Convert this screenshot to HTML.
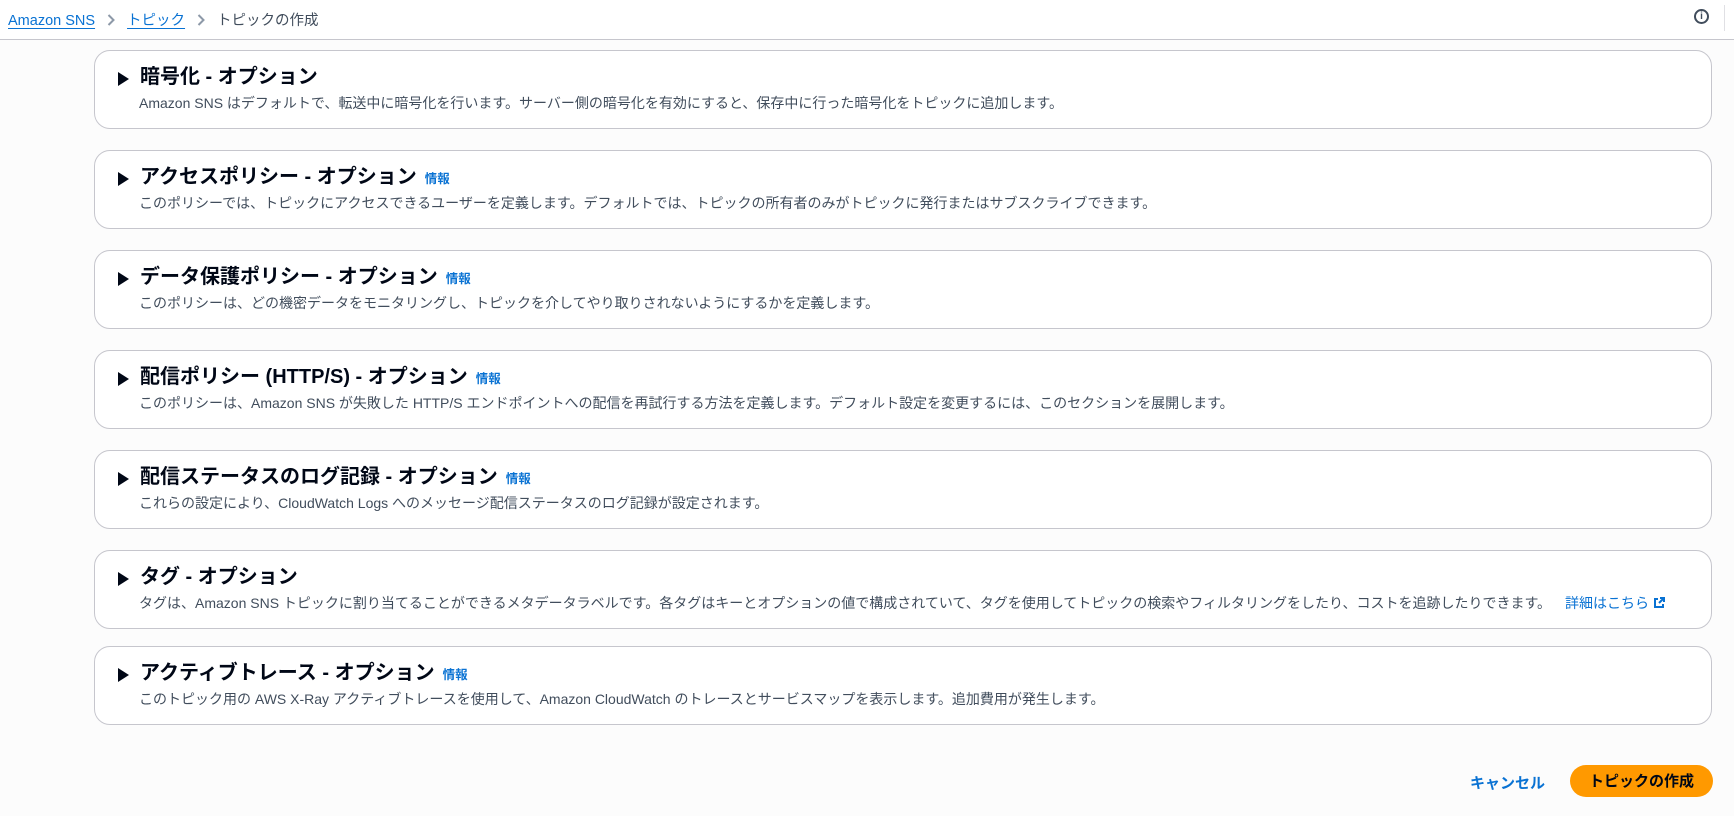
<!DOCTYPE html>
<html><head><meta charset="utf-8"><style>
*{margin:0;padding:0;box-sizing:border-box}
body{width:1734px;height:816px;background:#fcfcfc;font-family:"Liberation Sans","Noto Sans CJK JP",sans-serif;position:relative;overflow:hidden;color:#000716}
.hdr{position:absolute;left:0;top:0;width:1734px;height:40px;background:#fff;border-bottom:1px solid #c6c6cd}
.bc{position:absolute;left:8px;top:9px;font-size:14.5px;color:#414d5c;white-space:nowrap}
.bc a{color:#0972d3;text-decoration:underline;text-underline-offset:3px}
.bc svg{margin:0 12px;vertical-align:-1px}
.info{position:absolute;left:1694px;top:9px;width:15px;height:15px;border:2px solid #414d5c;border-radius:50%;font-size:10px;font-weight:bold;text-align:center;line-height:11px;color:#414d5c}
.vl{position:absolute;left:1724px;top:5px;width:1px;height:26px;background:#e0e0e4}
.card{position:absolute;left:94px;width:1618px;height:79px;background:#fff;border:1px solid #c6c6cd;border-radius:16px}
.tri{position:absolute;left:23px;top:21px;width:0;height:0;border-left:11px solid #000716;border-top:7px solid transparent;border-bottom:7px solid transparent}
.t{position:absolute;left:45px;top:14px;font-size:20px;font-weight:bold;white-space:nowrap;line-height:24px}
.t .i{font-size:12.5px;color:#0972d3;margin-left:8px;font-weight:bold}
.d{position:absolute;left:44px;top:43px;font-size:14px;color:#414d5c;white-space:nowrap;line-height:18px}
.d a{color:#0972d3;margin-left:14px}
.cancel{position:absolute;left:1470px;top:772px;font-size:15px;font-weight:bold;color:#0972d3}
.btn{position:absolute;left:1570px;top:765px;width:143px;height:32px;background:#ff9900;border-radius:16px;font-size:15px;font-weight:bold;text-align:center;line-height:33px;color:#000716}
</style></head><body>
<div class="hdr">
<div class="bc"><a>Amazon SNS</a><svg width="8" height="12" viewBox="0 0 8 12"><path d="M1.5 1l5 5-5 5" fill="none" stroke="#8d99a8" stroke-width="2"/></svg><a>トピック</a><svg width="8" height="12" viewBox="0 0 8 12"><path d="M1.5 1l5 5-5 5" fill="none" stroke="#8d99a8" stroke-width="2"/></svg>トピックの作成</div>
<div class="info">i</div><div class="vl"></div>
</div>
<div class="card" style="top:50px"><div class="tri"></div><div class="t">暗号化 - オプション</div><div class="d">Amazon SNS はデフォルトで、転送中に暗号化を行います。サーバー側の暗号化を有効にすると、保存中に行った暗号化をトピックに追加します。</div></div>
<div class="card" style="top:150px"><div class="tri"></div><div class="t">アクセスポリシー - オプション<span class="i">情報</span></div><div class="d">このポリシーでは、トピックにアクセスできるユーザーを定義します。デフォルトでは、トピックの所有者のみがトピックに発行またはサブスクライブできます。</div></div>
<div class="card" style="top:250px"><div class="tri"></div><div class="t">データ保護ポリシー - オプション<span class="i">情報</span></div><div class="d">このポリシーは、どの機密データをモニタリングし、トピックを介してやり取りされないようにするかを定義します。</div></div>
<div class="card" style="top:350px"><div class="tri"></div><div class="t">配信ポリシー (HTTP/S) - オプション<span class="i">情報</span></div><div class="d">このポリシーは、Amazon SNS が失敗した HTTP/S エンドポイントへの配信を再試行する方法を定義します。デフォルト設定を変更するには、このセクションを展開します。</div></div>
<div class="card" style="top:450px"><div class="tri"></div><div class="t">配信ステータスのログ記録 - オプション<span class="i">情報</span></div><div class="d">これらの設定により、CloudWatch Logs へのメッセージ配信ステータスのログ記録が設定されます。</div></div>
<div class="card" style="top:550px"><div class="tri"></div><div class="t">タグ - オプション</div><div class="d">タグは、Amazon SNS トピックに割り当てることができるメタデータラベルです。各タグはキーとオプションの値で構成されていて、タグを使用してトピックの検索やフィルタリングをしたり、コストを追跡したりできます。<a>詳細はこちら <svg width="12" height="12" viewBox="0 0 12 12" style="vertical-align:-1px"><path d="M5 2H2v8h8V7" fill="none" stroke="#0972d3" stroke-width="2"/><path d="M6 6l5-5M7 1h4v4" fill="none" stroke="#0972d3" stroke-width="2"/></svg></a></div></div>
<div class="card" style="top:646px"><div class="tri"></div><div class="t">アクティブトレース - オプション<span class="i">情報</span></div><div class="d">このトピック用の AWS X-Ray アクティブトレースを使用して、Amazon CloudWatch のトレースとサービスマップを表示します。追加費用が発生します。</div></div>
<div class="cancel">キャンセル</div>
<div class="btn">トピックの作成</div>
</body></html>
